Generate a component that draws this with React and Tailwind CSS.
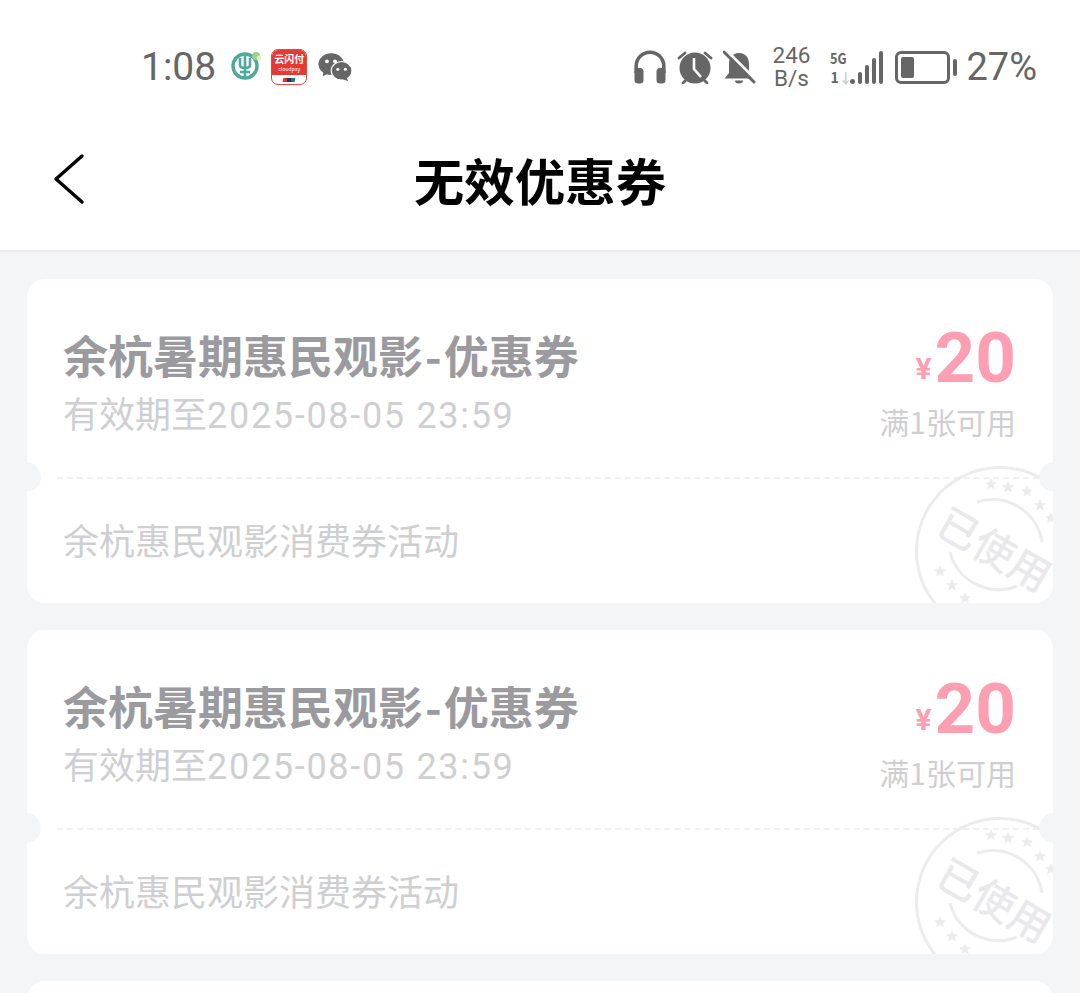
const FONT = '"Noto Sans CJK SC", "Noto Sans", sans-serif';

function AbcLogo() {
  return (
    <svg width="32" height="32" viewBox="0 0 32 32" className="-mt-1">
      <circle cx="14" cy="17" r="12" fill="none" stroke="#4fa99a" strokeWidth="3.4" />
      <path d="M14 7v21M9 9v7q0 3 5 3t5-3V9M9 23h10" fill="none" stroke="#4fa99a" strokeWidth="2.6" />
      <circle cx="25" cy="7" r="4" fill="#9ccf8a" />
      <circle cx="28" cy="9" r="2.4" fill="#e3efb8" />
    </svg>
  );
}

function CloudPayIcon() {
  return (
    <div className="w-[36px] h-[36px] rounded-[7px] bg-white border border-[#e8453c] overflow-hidden flex flex-col">
      <div className="h-[25px] bg-[#e53935] flex flex-col items-center justify-center text-white">
        <span className="text-[10px] leading-[12px] font-bold">云闪付</span>
        <span className="text-[5px] leading-[7px]">cloudpay</span>
      </div>
      <div className="flex-1 flex items-center justify-center">
        <div className="w-[12px] h-[4px] -skew-x-12 bg-[linear-gradient(90deg,#d33_33%,#236_33%_66%,#277_66%)]" />
      </div>
    </div>
  );
}

function WechatIcon() {
  return (
    <svg width="34" height="30" viewBox="0 0 36 30">
      <ellipse cx="14" cy="12" rx="13.5" ry="11.5" fill="#666" />
      <path d="M6 19l-1 6 7-4z" fill="#666" />
      <ellipse cx="25" cy="19" rx="11" ry="9.8" stroke="#fff" strokeWidth="1.2" fill="#666" />
      <path d="M30 26l2 4-6-2z" fill="#666" />
      <circle cx="9.5" cy="9" r="2" fill="#fff" />
      <circle cx="18" cy="9" r="2" fill="#fff" />
      <circle cx="21" cy="17.5" r="1.6" fill="#fff" />
      <circle cx="29" cy="17.5" r="1.6" fill="#fff" />
    </svg>
  );
}

function HeadphonesIcon() {
  return (
    <svg width="32" height="34" viewBox="0 0 32 34">
      <path d="M2.2 23V16a13.8 13.8 0 0 1 27.6 0v7" fill="none" stroke="#666" strokeWidth="3.6" />
      <rect x="0.5" y="18" width="9" height="15.5" rx="3.5" fill="#666" />
      <rect x="22.5" y="18" width="9" height="15.5" rx="3.5" fill="#666" />
    </svg>
  );
}

function AlarmIcon() {
  return (
    <svg width="36" height="34" viewBox="0 0 36 34">
      <circle cx="18" cy="18" r="15.5" fill="#666" />
      <path d="M2 8l6-5M34 8l-6-5M6 33l3-3M30 33l-3-3" stroke="#666" strokeWidth="2.8" strokeLinecap="round" />
      <path d="M17 8v11l7 8" fill="none" stroke="#fff" strokeWidth="2.6" />
    </svg>
  );
}

function BellOffIcon() {
  return (
    <svg width="33" height="34" viewBox="0 0 33 34">
      <path d="M16 3c7 0 10 5 10 11v9l5 5.5H1.5L6 23v-9c0-6 3-11 10-11z" fill="#666" />
      <path d="M12 30.5h8a4 3 0 0 1-8 0z" fill="#666" />
      <path d="M3 0l31 31" stroke="#fff" strokeWidth="3" />
      <path d="M1 2l30 30" stroke="#666" strokeWidth="3" strokeLinecap="round" />
    </svg>
  );
}

function SignalIcon() {
  return (
    <div className="flex items-end gap-[2.4px] h-[34px] relative w-[53px] pl-[20px]">
      <div className="absolute left-0 top-[0px] text-[15px] leading-[15px] font-bold text-[#666] scale-x-[0.85] origin-left">5G</div>
      <div className="absolute left-0 bottom-0 text-[14px] leading-[14px] font-bold text-[#666]">1<span className="text-[#ccc]">↓</span></div>
      <div className="w-[5px] h-[5px] rounded-full bg-[#666]" />
      <div className="w-[5px] h-[12px] rounded-full bg-[#666]" />
      <div className="w-[5px] h-[19px] rounded-full bg-[#666]" />
      <div className="w-[5px] h-[26px] rounded-full bg-[#666]" />
      <div className="w-[5px] h-[33px] rounded-full bg-[#666]" />
    </div>
  );
}

function BatteryIcon() {
  return (
    <div className="flex items-center gap-[3px]">
      <div className="w-[55px] h-[33px] rounded-[6px] border-[3px] border-[#666] p-[3px]">
        <div className="w-[13px] h-full rounded-[2px] bg-[#666]" />
      </div>
      <div className="w-[4px] h-[17px] rounded-full bg-[#666]" />
    </div>
  );
}

function StatusBar() {
  return (
    <div className="h-[125px] pl-[141px] pr-[43px] pt-[9px] flex items-center justify-between text-[#666]">
      <div className="flex items-center">
        <span className="text-[39px] leading-none font-['Roboto'] mr-[15px]">1:08</span>
        <AbcLogo />
        <div className="ml-[8px]"><CloudPayIcon /></div>
        <div className="ml-[11px]"><WechatIcon /></div>
      </div>
      <div className="flex items-center">
        <HeadphonesIcon />
        <div className="ml-[11px]"><AlarmIcon /></div>
        <div className="ml-[10px]"><BellOffIcon /></div>
        <div className="ml-[17px] font-['Roboto'] text-[22.5px] leading-[23px] text-center">246<br />B/s</div>
        <div className="ml-[20px]"><SignalIcon /></div>
        <div className="ml-[12px]"><BatteryIcon /></div>
        <span className="ml-[9px] text-[38px] leading-none font-['Roboto']">27%</span>
      </div>
    </div>
  );
}

function Header() {
  return (
    <div className="h-[127px] bg-white border-b-2 border-[#ececee] relative flex items-center justify-center pb-[16px]">
      <svg className="absolute left-[52px] top-[28px]" width="34" height="52" viewBox="0 0 34 52">
        <path d="M30 3L4 26l26 23" fill="none" stroke="#000" strokeWidth="3.4" strokeLinecap="round" strokeLinejoin="round" />
      </svg>
      <h1 className="text-[50.5px] leading-none font-bold text-black">无效优惠券</h1>
    </div>
  );
}

function UsedStamp() {
  const stars = [
    [-9, -67], [8, -64], [27, -60], [40, -46], [51, -33], [-60, 20], [-48, 34], [-35, 47],
  ];
  return (
    <div className="absolute left-[888px] top-[187px] w-[170px] h-[170px]">
      <svg width="170" height="170" viewBox="-85 -85 170 170" className="absolute inset-0">
        <circle r="83.5" fill="none" stroke="#ececee" strokeWidth="3" />
        <path d="M-23 -49A 50 50 0 0 1 42 -9" fill="none" stroke="#ececee" strokeWidth="3" />
        <path d="M-50 1A 50 50 0 0 0 17 35" fill="none" stroke="#ececee" strokeWidth="3" />
        {stars.map(([x, y]) => (
          <path key={`${x}${y}`} transform={`translate(${x} ${y}) scale(1.2)`} fill="#ececee" d="M0-5l1.5 3.4 3.5.3-2.7 2.3.9 3.6L0 2.6-3.2 4.6l.9-3.6L-5-1.3l3.5-.3z" />
        ))}
      </svg>
      <div className="absolute inset-0 flex items-center justify-center">
        <div className="-translate-x-[5px] -translate-y-[4px] rotate-[30deg] text-[41px] leading-none font-medium text-[#e9e9eb] whitespace-nowrap">已使用</div>
      </div>
    </div>
  );
}

function Coupon() {
  return (
    <div className="relative shrink-0 h-[324px] bg-white rounded-[18px] overflow-hidden">
      <div className="h-[198px] pl-[36px] pr-[37px] pt-[48px] flex justify-between">
        <div>
          <div className="text-[45px] leading-[56px] font-bold text-[#9b9b9f]">
            余杭暑期惠民观影<span className="px-[2px]">-</span>优惠券
          </div>
          <div className="mt-[3px] text-[36px] leading-[52px] text-[#cfcfd1]">
            有效期至<span className="font-['Roboto'] tracking-[1.7px]">2025-08-05 23:59</span>
          </div>
        </div>
        <div className="flex flex-col items-end">
          <div className="flex items-baseline h-[60px] leading-none text-[#fc9fb2] font-bold font-['Roboto'] pt-[1px]">
            <span className="text-[30px] mr-[3px] -translate-y-[3px]">¥</span>
            <span className="text-[71px] leading-[60px]">20</span>
          </div>
          <div className="mt-[14px] text-[30px] leading-[40px] text-[#cfcfd1]">满1张可用</div>
        </div>
      </div>
      <div className="ml-[30px] mr-[14px] border-t-2 border-dashed border-[#f0f0f2]" />
      <div className="pl-[36px] pt-[34px] text-[36px] leading-[52px] text-[#cfcfd1]">余杭惠民观影消费券活动</div>
      <UsedStamp />
      <div className="absolute -left-[16px] top-[183px] w-[30px] h-[30px] rounded-full bg-[#f4f5f7]" />
      <div className="absolute -right-[16px] top-[183px] w-[30px] h-[30px] rounded-full bg-[#f4f5f7]" />
    </div>
  );
}

export default function App() {
  return (
    <div className="w-[1080px] h-[993px] overflow-hidden bg-[#f4f5f7]" style={{ fontFamily: FONT }}>
      <div className="bg-white">
        <StatusBar />
        <Header />
      </div>
      <div className="px-[27px] pt-[27px] flex flex-col gap-[27px]">
        <Coupon />
        <Coupon />
        <Coupon />
      </div>
    </div>
  );
}
